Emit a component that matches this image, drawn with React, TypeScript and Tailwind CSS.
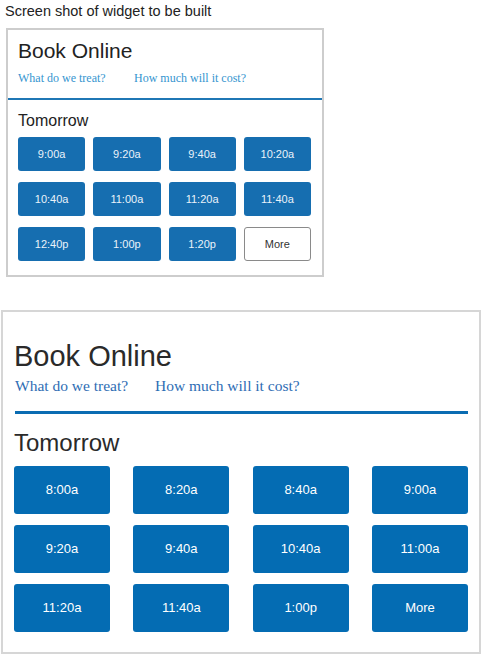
const topTimes = ["9:00a", "9:20a", "9:40a", "10:20a", "10:40a", "11:00a", "11:20a", "11:40a", "12:40p", "1:00p", "1:20p"];
const bottomTimes = ["8:00a", "8:20a", "8:40a", "9:00a", "9:20a", "9:40a", "10:40a", "11:00a", "11:20a", "11:40a", "1:00p"];

const sans = "font-['Liberation_Sans',Arial,sans-serif]";
const serif = "font-['Liberation_Serif','Times_New_Roman',serif]";

function SmallWidget() {
  return (
    <div className="ml-[6px] mt-[8px] w-[318px] h-[249px] border-2 border-[#cdcdcd] bg-white">
      <div className="px-[10px] pt-[9px] pb-[13px]">
        <h2 className={`${sans} text-[21px] leading-[24px] text-[#222]`}>Book Online</h2>
        <div className={`${serif} mt-[8px] flex text-[12px] leading-[14px] text-[#3595cf]`}>
          <a href="#" className="w-[116px]">What do we treat?</a>
          <a href="#">How much will it cost?</a>
        </div>
      </div>
      <div className="h-[2px] bg-[#1f77b5]" />
      <div className="px-[10px] pt-[11px]">
        <h3 className={`${sans} text-[16px] leading-[20px] text-[#222]`}>Tomorrow</h3>
        <div className="mt-[6px] grid w-[293px] grid-cols-4 gap-x-[8px] gap-y-[11px]">
          {topTimes.map((t) => (
            <button
              key={t}
              className={`${sans} h-[34px] rounded-[3px] bg-[#166eb0] text-[11px] text-[#eaf2fa]`}
            >
              {t}
            </button>
          ))}
          <button
            className={`${sans} h-[34px] rounded-[3px] border border-[#8a8a8a] bg-white text-[11px] text-[#333]`}
          >
            More
          </button>
        </div>
      </div>
    </div>
  );
}

function BigWidget() {
  return (
    <div className="ml-[1px] mt-[33px] w-[480px] h-[344px] border-2 border-[#d6d6d6] bg-white px-[11px] pt-[28px]">
      <h2 className={`${sans} text-[29px] leading-[32px] text-[#2a2a2a]`}>Book Online</h2>
      <div className={`${serif} mt-[5px] flex pl-px text-[15.5px] leading-[18px] text-[#2e6db4]`}>
        <a href="#" className="w-[140px]">What do we treat?</a>
        <a href="#">How much will it cost?</a>
      </div>
      <div className="mt-[16px] ml-px h-[3px] bg-[#0a6cb2]" />
      <h3 className={`${sans} mt-[15px] text-[24px] leading-[28px] text-[#2a2a2a]`}>Tomorrow</h3>
      <div className="mt-[9px] grid grid-cols-[repeat(4,96px)] justify-between gap-y-[11px]">
        {[...bottomTimes, "More"].map((t) => (
          <button
            key={t}
            className={`${sans} h-[48px] rounded-[3px] bg-[#046cb3] text-[13px] text-white`}
          >
            {t}
          </button>
        ))}
      </div>
    </div>
  );
}

export default function App() {
  return (
    <main className="min-h-screen w-[482px] bg-white">
      <p className={`${sans} pl-[5px] pt-[3px] text-[14.5px] leading-[17px] text-[#222]`}>
        Screen shot of widget to be built
      </p>
      <SmallWidget />
      <BigWidget />
    </main>
  );
}
